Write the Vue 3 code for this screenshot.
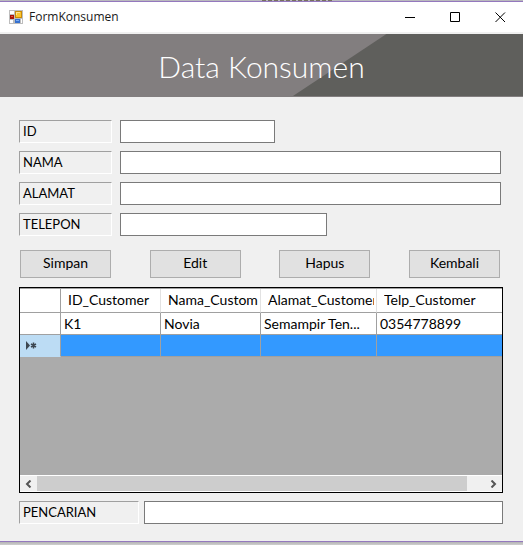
<script setup>
import { reactive, ref } from 'vue'

const fields = [
  { id: 'id', label: 'ID', size: 'short' },
  { id: 'nama', label: 'NAMA', size: 'full' },
  { id: 'alamat', label: 'ALAMAT', size: 'full' },
  { id: 'telepon', label: 'TELEPON', size: 'medium' },
]
const form = reactive({ id: '', nama: '', alamat: '', telepon: '' })
const search = ref('')
const actions = ['Simpan', 'Edit', 'Hapus', 'Kembali']
const columns = ['ID_Customer', 'Nama_Customer', 'Alamat_Customer', 'Telp_Customer']
const rows = [['K1', 'Novia', 'Semampir Ten...', '0354778899']]
</script>

<template>
  <div class="desktop">
    <div class="behind"><span></span></div>
    <main class="window">
      <header class="titlebar">
        <svg class="app-icon" viewBox="0 0 14 14" aria-hidden="true">
          <path fill="#bdbdbd" d="M0 0h14v14H0z" />
          <path fill="#fff" d="M1 1h4v3H1zM1 10h3v3H1zM12 9h1v4h-1z" />
          <path fill="#a81508" d="M1 5h4v4H1z" />
          <path fill="#e8503c" d="M2 6h2v1H2z" />
          <path fill="#c98a08" d="M6 1h7v7H6z" />
          <path fill="#fbc52c" d="M7 2h5v5H7z" />
          <path fill="#ffe48a" d="M7 2h4v1H8v2H7z" />
          <path fill="#3670cf" d="M6 9h5v4H6z" />
          <path fill="#79aaf2" d="M7 10h3v1H7z" />
        </svg>
        <span class="caption">FormKonsumen</span>
        <button class="sys" aria-label="Minimize">
          <svg viewBox="0 0 11 11"><path d="M0 5.5h10" /></svg>
        </button>
        <button class="sys" aria-label="Maximize">
          <svg viewBox="0 0 11 11"><path d="M.5 .5h9v9h-9z" /></svg>
        </button>
        <button class="sys" aria-label="Close">
          <svg viewBox="0 0 11 11"><path d="M.5 .5l9.500 9.500M10 .5l-9.500 9.500" /></svg>
        </button>
      </header>

      <div class="banner">
        <svg class="slant" viewBox="0 0 229 62" preserveAspectRatio="none" aria-hidden="true">
          <path fill="#5f5f5c" d="M93 0H229V62H0z" />
        </svg>
        <h1>Data Konsumen</h1>
      </div>

      <form class="body" @submit.prevent>
        <div class="fields">
          <div v-for="f in fields" :key="f.id" class="field">
            <label class="tag" :for="f.id">{{ f.label }}</label>
            <input :id="f.id" v-model="form[f.id]" type="text" :class="['box', f.size]" />
          </div>
        </div>

        <div class="actions">
          <button v-for="a in actions" :key="a" type="button" class="action">{{ a }}</button>
        </div>

        <div class="grid">
          <table>
            <colgroup>
              <col class="c-head" /><col class="c-std" /><col class="c-std" /><col class="c-wide" /><col />
            </colgroup>
            <thead>
              <tr>
                <th></th>
                <th v-for="c in columns" :key="c"><span class="head-text">{{ c }}</span></th>
              </tr>
            </thead>
            <tbody>
              <tr v-for="r in rows" :key="r[0]">
                <td></td>
                <td v-for="v in r" :key="v">{{ v }}</td>
              </tr>
              <tr class="new">
                <td class="marker">
                  <svg viewBox="0 0 13 9" aria-label="Baris baru">
                    <path fill="#3c4650" d="M1 0v9l4-4.500z" />
                    <path stroke="#3c4650" stroke-width="1.500" d="M8.500 1.500v6M6 3l5 3M11 3l-5 3" />
                  </svg>
                </td>
                <td></td><td></td><td></td><td></td>
              </tr>
            </tbody>
          </table>
          <div class="scroll">
            <button type="button" class="arrow" aria-label="Gulir kiri">
              <svg viewBox="0 0 7 8"><path d="M5.500 .5L2 4l3.500 3.500" /></svg>
            </button>
            <div class="track"><div class="thumb"></div></div>
            <button type="button" class="arrow" aria-label="Gulir kanan">
              <svg viewBox="0 0 7 8"><path d="M1.500 .5L5 4 1.500 7.500" /></svg>
            </button>
          </div>
        </div>

        <div class="search">
          <label class="tag" for="search">PENCARIAN</label>
          <input id="search" v-model="search" type="text" class="box full" />
        </div>
      </form>
    </main>
    <div class="shadow"></div>
  </div>
</template>

<style>
body {
  background: #c8c8c8;
}
</style>

<style scoped>
.desktop {
  display: flex;
  flex-direction: column;
  min-height: 100vh;
  font-family: "Century Gothic", Lato, sans-serif;
  font-size: 14px;
  line-height: 20px;
  color: #000;
}
.desktop * {
  box-sizing: border-box;
}
.behind {
  height: 1px;
  background: #b9b9bd;
}
.behind span {
  display: block;
  width: 70px;
  height: 1px;
  margin-left: 50%;
  background: repeating-linear-gradient(90deg, #77705f 0 4px, #b9b9bd 4px 6px);
}
.window {
  flex: 1;
  display: flex;
  flex-direction: column;
  border: solid #9478be;
  border-width: 1px 0;
  background: #f0f0f0;
}
.titlebar {
  display: flex;
  align-items: center;
  height: 30px;
  padding-left: 9px;
  background: #fff;
}
.app-icon {
  width: 14px;
  height: 14px;
}
.caption {
  flex: 1;
  padding-left: 6px;
  font: 12px/16px "Open Sans", sans-serif;
  color: #1a1a1a;
}
.sys {
  display: flex;
  align-items: center;
  justify-content: center;
  width: 45px;
  height: 28px;
  padding: 0;
  border: 0;
  background: none;
}
.sys svg {
  width: 11px;
  height: 11px;
  fill: none;
  stroke: #000;
}
.banner {
  position: relative;
  display: flex;
  align-items: center;
  justify-content: center;
  height: 63px;
  margin-top: 2px;
  background: #827e7f;
}
.slant {
  position: absolute;
  top: 0;
  right: 0;
  width: 44%;
  height: 62px;
}
h1 {
  position: relative;
  margin: 0;
  font-size: 30px;
  line-height: 36px;
  font-weight: 300;
  color: #fff;
}
.body {
  flex: 1;
  display: flex;
  flex-direction: column;
  padding: 23px 20px 17px 19px;
}
.fields {
  display: flex;
  flex-direction: column;
  gap: 8px;
  padding-right: 2px;
}
.field {
  display: flex;
  gap: 8px;
}
.tag {
  width: 93px;
  height: 23px;
  padding-left: 3px;
  border: 1px solid;
  border-color: #a0a0a0 #fff #fff #a0a0a0;
  font-size: 13px;
}
.box {
  height: 23px;
  min-width: 0;
  padding: 0 3px;
  border: 1px solid #7a7a7a;
  background: #fff;
  font: inherit;
}
.short {
  width: 155px;
}
.medium {
  width: 207px;
}
.full {
  flex: 1;
}
.actions {
  display: flex;
  justify-content: space-between;
  padding: 14px 3px 9px 1px;
}
.action {
  width: 91px;
  height: 28px;
  padding: 0 0 2px;
  border: 1px solid #adadad;
  background: #e1e1e1;
  font: inherit;
  color: inherit;
}
.grid {
  flex: 1;
  display: flex;
  flex-direction: column;
  justify-content: space-between;
  border: 1px solid #000;
  background: #ababab;
}
table {
  width: 100%;
  table-layout: fixed;
  border-collapse: separate;
  border-spacing: 0;
  border-top: 1px solid #a0a0a0;
}
.c-head {
  width: 41px;
}
.c-std {
  width: 100px;
}
.c-wide {
  width: 116px;
}
th,
td {
  height: 22px;
  padding: 0 3px;
  border: solid #a0a0a0;
  border-width: 0 1px 1px 0;
  background: #fff;
  font-weight: 400;
  text-align: left;
  white-space: nowrap;
  overflow: hidden;
}
th {
  height: 24px;
  padding: 0 2px 2px 7px;
  border-right-color: #e2e2e2;
}
.head-text {
  display: block;
  overflow: hidden;
}
th:first-child {
  border-right-color: #a0a0a0;
}
th:last-child,
td:last-child {
  border-right: 0;
}
.new td {
  background: #3399ff;
}
.new .marker {
  padding: 0 0 0 5px;
  border-color: #bcdcf4;
  border-right-color: #a0a0a0;
  background: #bcdcf4;
}
.marker svg {
  display: block;
  width: 13px;
  height: 9px;
}
.scroll {
  display: flex;
  height: 17px;
  border: solid #fff;
  border-width: 1px 0;
  background: #f0f0f0;
}
.arrow {
  display: flex;
  align-items: center;
  justify-content: center;
  width: 17px;
  padding: 0;
  border: 0;
  background: none;
}
.arrow svg {
  width: 7px;
  height: 8px;
  fill: none;
  stroke: #555;
  stroke-width: 2;
}
.track {
  flex: 1;
}
.thumb {
  width: 96%;
  height: 100%;
  background: #cdcdcd;
}
.search {
  display: flex;
  gap: 5px;
  padding-top: 8px;
}
.search .tag {
  width: 120px;
}
.shadow {
  height: 3px;
  background: linear-gradient(#b4b4b4, #cfcfcf);
}
</style>
